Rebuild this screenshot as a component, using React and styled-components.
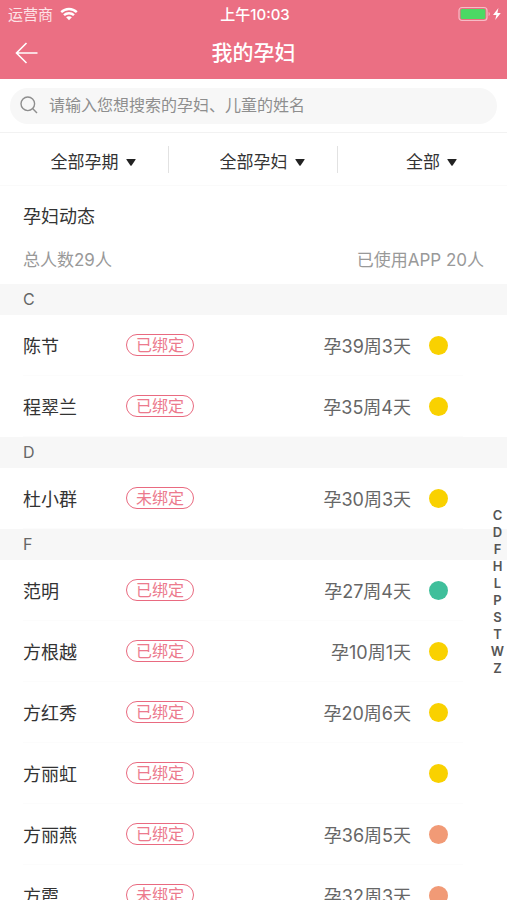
import * as React from 'react';
import {useState} from 'react';
import styled, {createGlobalStyle} from 'styled-components';

const groups=[
  {letter:'C',people:[
    {name:'陈节',bound:true,week:'孕39周3天',risk:'yellow'},
    {name:'程翠兰',bound:true,week:'孕35周4天',risk:'yellow'},
  ]},
  {letter:'D',people:[
    {name:'杜小群',bound:false,week:'孕30周3天',risk:'yellow'},
  ]},
  {letter:'F',people:[
    {name:'范明',bound:true,week:'孕27周4天',risk:'green'},
    {name:'方根越',bound:true,week:'孕10周1天',risk:'yellow'},
    {name:'方红秀',bound:true,week:'孕20周6天',risk:'yellow'},
    {name:'方丽虹',bound:true,week:'',risk:'yellow'},
    {name:'方丽燕',bound:true,week:'孕36周5天',risk:'orange'},
    {name:'方霞',bound:false,week:'孕32周3天',risk:'orange'},
  ]},
];
const letters=['C','D','F','H','L','P','S','T','W','Z'];
const filters=['全部孕期','全部孕妇','全部'];
const riskColors={yellow:'#f9d100',green:'#3fbf9b',orange:'#f19a76'};

function StatusBar(){
  return (
    <Status>
      <Carrier>
        运营商
        <svg width="18" height="14" viewBox="0 0 18 14" fill="none" stroke="#fff" strokeWidth="2.4">
          <path d="M1.2 5.2C5.6 0.9 12.4 0.9 16.8 5.2"/>
          <path d="M4 8.2C6.8 5.5 11.2 5.5 14 8.2"/>
          <path d="M9 13.2L6.1 10.3C7.7 8.8 10.3 8.8 11.9 10.3Z" fill="#fff" stroke="none"/>
        </svg>
      </Carrier>
      <Clock>上午10:03</Clock>
      <Power>
        <svg width="44" height="16" viewBox="0 0 44 16">
          <rect x="1" y="1.5" width="28" height="13" rx="3" fill="none" stroke="#f7bcc6" strokeWidth="1.2"/>
          <rect x="2.6" y="3" width="24.8" height="10" rx="1.5" fill="#4cd964"/>
          <path d="M30.6 6V10C32.2 9.4 32.2 6.6 30.6 6Z" fill="#f7bcc6"/>
          <path d="M40.4 2L35 9H38.4L37.2 14L42.8 7H39.4Z" fill="#fff"/>
        </svg>
      </Power>
    </Status>
  );
}

function Filter({label}){
  return (
    <FilterItem>
      <FilterSelect aria-label={label}>
        <option>{label}</option>
      </FilterSelect>
      <svg width="10" height="7" viewBox="0 0 10 7" fill="#222">
        <path d="M0.8 0H9.2Q10 0 9.5 0.8L5.6 6.4Q5 7.1 4.4 6.4L0.5 0.8Q0 0 0.8 0Z"/>
      </svg>
    </FilterItem>
  );
}

function Person({person}){
  return (
    <Row>
      <Name>{person.name}</Name>
      <Badge>{person.bound ? '已绑定' : '未绑定'}</Badge>
      <Week>{person.week}</Week>
      <Dot $color={riskColors[person.risk]}/>
    </Row>
  );
}

function App(){
  const [keyword,setKeyword]=useState('');
  return (
    <Screen>
      <GlobalStyle/>
      <Header>
        <StatusBar/>
        <NavBar>
          <BackButton type="button" aria-label="返回">
            <svg width="24" height="22" viewBox="0 0 24 22" fill="none" stroke="#fff" strokeWidth="1.6">
              <path d="M11.5 1L1.5 11L11.5 21M1.5 11H22.5"/>
            </svg>
          </BackButton>
          <PageTitle>我的孕妇</PageTitle>
        </NavBar>
      </Header>
      <SearchBar>
        <SearchBox>
          <svg width="18" height="18" viewBox="0 0 18 18" fill="none" stroke="#8e8e8e" strokeWidth="1.4">
            <circle cx="7.8" cy="7.8" r="6.8"/>
            <path d="M12.6 12.6L17 17"/>
          </svg>
          <SearchInput
            aria-label="搜索"
            value={keyword}
            onChange={(e)=>setKeyword(e.target.value)}
            placeholder="请输入您想搜索的孕妇、儿童的姓名"
          />
        </SearchBox>
      </SearchBar>
      <FilterBar>
        {filters.map((label)=><Filter key={label} label={label}/>)}
      </FilterBar>
      <Summary>
        <SummaryTitle>孕妇动态</SummaryTitle>
        <SummaryCounts>
          <span>总人数29人</span>
          <span>已使用APP 20人</span>
        </SummaryCounts>
      </Summary>
      <ListArea>
        <Scroller>
          {groups.map((group)=>(
            <section key={group.letter} id={group.letter}>
              <GroupTitle>{group.letter}</GroupTitle>
              <People>
                {group.people.map((person)=><Person key={person.name} person={person}/>)}
              </People>
            </section>
          ))}
        </Scroller>
        <LetterIndex>
          {letters.map((letter)=>(
            <Letter key={letter} href={'#'+letter}>{letter}</Letter>
          ))}
        </LetterIndex>
      </ListArea>
    </Screen>
  );
}
export default App;

const GlobalStyle=createGlobalStyle`
  *{
    box-sizing:border-box;
  }
  body{
    margin:0;
    background-color:#fff;
    font-family:Inter,"Noto Sans CJK SC",sans-serif;
  }
  button,input,select{
    font-family:inherit;
  }
  svg{
    display:block;
    flex-shrink:0;
  }
`;
const Screen=styled.div`
  display:flex;
  flex-direction:column;
  height:100vh;
  overflow:hidden;
  color:#333;
`;
const Header=styled.header`
  background-color:#eb6f83;
  color:#fff;
`;
const Status=styled.div`
  display:grid;
  grid-template-columns:1fr auto 1fr;
  align-items:center;
  height:27px;
  padding:0 5px 0 8px;
  font-size:15px;
`;
const Carrier=styled.div`
  display:flex;
  align-items:center;
  gap:7px;
  color:#fde3e7;
`;
const Clock=styled.div`
  font-weight:500;
`;
const Power=styled.div`
  display:flex;
  justify-content:flex-end;
`;
const NavBar=styled.div`
  display:grid;
  grid-template-columns:56px 1fr 56px;
  align-items:center;
  height:52px;
`;
const BackButton=styled.button`
  height:48px;
  padding:0 0 0 15px;
  border:none;
  background:none;
  cursor:pointer;
`;
const PageTitle=styled.h1`
  margin:0;
  font-size:21px;
  line-height:30px;
  font-weight:500;
  text-align:center;
`;
const SearchBar=styled.div`
  padding:9px 10px 8px;
  border-bottom:1px solid #f2f2f2;
`;
const SearchBox=styled.label`
  display:flex;
  align-items:center;
  gap:11px;
  height:36px;
  padding:0 10px 2px;
  border-radius:18px;
  background-color:#f7f7f7;
`;
const SearchInput=styled.input`
  flex:1;
  min-width:0;
  padding:0;
  border:none;
  outline:none;
  background:none;
  font-size:16px;
  color:#333;
  &::placeholder{
    color:#8e8e8e;
    opacity:1;
  }
`;
const FilterBar=styled.div`
  display:grid;
  grid-template-columns:repeat(3,1fr);
  padding:13px 0 12px;
  border-bottom:1px solid #fafafa;
`;
const FilterItem=styled.label`
  display:flex;
  align-items:center;
  justify-content:center;
  gap:7px;
  height:27px;
  padding:5px 0 0 18px;
  border-right:1px solid #e2e2e2;
  &:last-child{
    border-right:none;
  }
`;
const FilterSelect=styled.select`
  appearance:none;
  field-sizing:content;
  padding:0;
  border:none;
  background:none;
  font-size:17px;
  line-height:27px;
  color:#333;
  cursor:pointer;
`;
const Summary=styled.div`
  padding:17px 23px 10px;
`;
const SummaryTitle=styled.h2`
  margin:0;
  font-size:18px;
  line-height:28px;
  font-weight:400;
`;
const SummaryCounts=styled.div`
  display:flex;
  justify-content:space-between;
  margin-top:16px;
  font-size:17px;
  line-height:27px;
  color:#999;
`;
const ListArea=styled.main`
  position:relative;
  flex:1;
  min-height:0;
`;
const Scroller=styled.div`
  height:100%;
  overflow-y:auto;
  scrollbar-width:none;
`;
const GroupTitle=styled.h3`
  margin:0;
  padding-left:23px;
  background-color:#f7f7f7;
  font-size:16px;
  line-height:31px;
  font-weight:400;
  color:#666;
`;
const People=styled.ul`
  margin:0;
  padding:0 44px 0 23px;
  list-style:none;
`;
const Row=styled.li`
  display:flex;
  align-items:center;
  height:61px;
  padding-right:15px;
  border-bottom:1px solid #fcfcfc;
  font-size:18px;
`;
const Name=styled.span`
  width:103px;
`;
const Badge=styled.span`
  width:68px;
  border:1px solid #e96a80;
  border-radius:11px;
  font-size:16px;
  line-height:20px;
  text-align:center;
  color:#ec7a8d;
`;
const Week=styled.span`
  flex:1;
  margin-right:18px;
  text-align:right;
  color:#666;
`;
const Dot=styled.span`
  width:19px;
  height:19px;
  border-radius:50%;
  background-color:${(props)=>props.$color};
`;
const LetterIndex=styled.nav`
  position:absolute;
  top:0;
  right:0;
  bottom:0;
  display:flex;
  flex-direction:column;
  justify-content:center;
  width:19px;
`;
const Letter=styled.a`
  font-size:13px;
  line-height:17px;
  font-weight:600;
  text-align:center;
  text-decoration:none;
  color:#555;
`;
